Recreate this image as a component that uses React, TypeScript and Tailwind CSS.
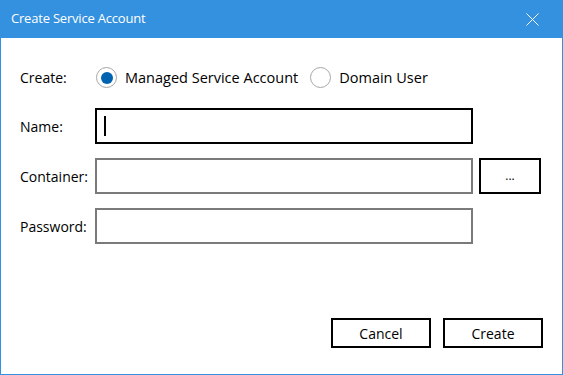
import React from "react";

const font = { fontFamily: '"Open Sans", "Noto Sans", sans-serif' };

function Radio({ checked, label }: { checked: boolean; label: string }) {
  return (
    <div className="flex items-center gap-[8px]">
      <span className="flex h-[21px] w-[21px] items-center justify-center rounded-full border border-[#a6a6a6] bg-white">
        {checked ? <span className="h-[12px] w-[12px] rounded-full bg-[#0063b1]" /> : null}
      </span>
      <span className="text-[14.5px] text-black">{label}</span>
    </div>
  );
}

function Field({ label, focused, children }: { label: string; focused?: boolean; children?: React.ReactNode }) {
  return (
    <div className="flex items-center">
      <span className="w-[75px] text-[14px] text-black">{label}</span>
      <div
        className={
          focused
            ? "flex h-[36px] w-[378px] items-center border-2 border-black bg-white"
            : "flex h-[36px] w-[378px] items-center border-2 border-[#7a7a7a] bg-white"
        }
      >
        {focused ? <span className="ml-[7px] h-[20px] w-[2px] bg-black" /> : null}
      </div>
      {children}
    </div>
  );
}

export default function App() {
  return (
    <div className="flex h-[375px] w-[563px] flex-col bg-[#3391df] px-[1px] pb-[1px]" style={font}>
      <div className="flex h-[38px] items-center justify-between pl-[10px] pr-[23px]">
        <span className="text-[13px] tracking-[-0.2px] text-white">Create Service Account</span>
        <svg width="13" height="13" viewBox="0 0 13 13" className="text-white">
          <path d="M0.5 0.5L12.5 12.5M12.5 0.5L0.5 12.5" stroke="currentColor" strokeWidth="1" />
        </svg>
      </div>

      <div className="flex flex-1 flex-col bg-white pl-[19px] pr-[19px] pt-[29px] pb-[26px]">
        <div className="flex h-[21px] items-center">
          <span className="w-[76px] text-[14px] text-black">Create:</span>
          <div className="flex items-center gap-[12px]">
            <Radio checked label="Managed Service Account" />
            <Radio checked={false} label="Domain User" />
          </div>
        </div>

        <div className="mt-[20px] flex flex-col gap-[14px]">
          <Field label="Name:" focused />
          <Field label="Container:">
            <button className="ml-[6px] flex h-[36px] w-[62px] items-center justify-center border-2 border-black bg-white text-[12px] text-black">
              ...
            </button>
          </Field>
          <Field label="Password:" />
        </div>

        <div className="mt-auto flex justify-end gap-[12px]">
          <button className="h-[30px] w-[100px] border-2 border-black bg-white text-[14px] text-black">Cancel</button>
          <button className="h-[30px] w-[100px] border-2 border-black bg-white text-[14px] text-black">Create</button>
        </div>
      </div>
    </div>
  );
}
